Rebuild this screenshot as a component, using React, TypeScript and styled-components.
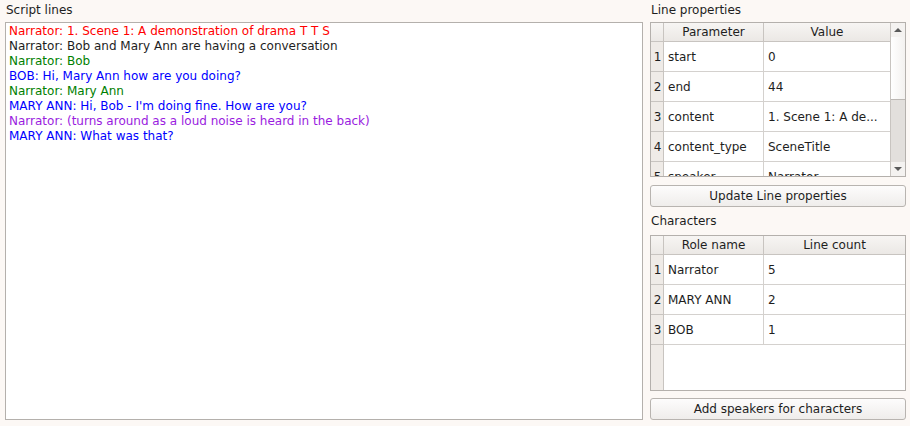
import React from "react";
import styled, { createGlobalStyle } from "styled-components";

const GlobalStyle = createGlobalStyle`
  html, body {
    margin: 0;
    padding: 0;
    background: #fcf8f5;
  }
  body {
    font-family: "DejaVu Sans", "Liberation Sans", sans-serif;
    font-size: 12px;
    color: #1e1e1e;
  }
`;

const Window = styled.div`
  width: 910px;
  height: 426px;
  box-sizing: border-box;
  padding: 0 4px 6px 5px;
  display: grid;
  grid-template-columns: 638px 256px;
  column-gap: 7px;
  background: #fcf8f5;
`;

const Column = styled.div`
  display: flex;
  flex-direction: column;
  min-height: 0;
`;

const Label = styled.div<{ $top: number; $bottom: number }>`
  height: 14px;
  line-height: 14px;
  margin-top: ${(p) => p.$top}px;
  margin-bottom: ${(p) => p.$bottom}px;
  padding-left: 1px;
  color: #1e1e1e;
`;

const ScriptBox = styled.div`
  flex: 1;
  background: #ffffff;
  border: 1px solid #b4b0ac;
  padding: 1px 3px;
  overflow: hidden;
`;

const ScriptLine = styled.div<{ $color: string }>`
  color: ${(p) => p.$color};
  line-height: 15px;
  white-space: nowrap;
`;

const TableFrame = styled.div<{ $height: number; $scroll?: boolean }>`
  height: ${(p) => p.$height}px;
  box-sizing: border-box;
  border: 1px solid #b4b0ac;
  background: #ffffff;
  display: grid;
  grid-template-columns: ${(p) => (p.$scroll ? "1fr 15px" : "1fr")};
  overflow: hidden;
`;

const Grid = styled.div<{ $rows: string }>`
  display: grid;
  grid-template-columns: 13px 100px 1fr;
  grid-template-rows: ${(p) => p.$rows};
  grid-auto-rows: 30px;
  overflow: hidden;
  min-height: 0;
`;

const HeaderCell = styled.div`
  background: linear-gradient(#f7f5f3, #ebe8e5);
  border-right: 1px solid #c8c4c0;
  border-bottom: 1px solid #c8c4c0;
  display: flex;
  align-items: center;
  justify-content: center;
  color: #1e1e1e;
  &:nth-child(3) {
    border-right: none;
  }
`;

const RowHead = styled.div`
  background: #efebe7;
  border-right: 1px solid #c8c4c0;
  border-bottom: 1px solid #c8c4c0;
  display: flex;
  align-items: center;
  justify-content: center;
  padding-left: 1px;
`;

const Cell = styled.div<{ $last?: boolean }>`
  border-right: ${(p) => (p.$last ? "none" : "1px solid #d4d1ce")};
  border-bottom: 1px solid #d4d1ce;
  display: flex;
  align-items: center;
  padding-left: 4px;
  white-space: nowrap;
  overflow: hidden;
`;

const EmptyHead = styled.div`
  background: #efebe7;
  border-right: 1px solid #c8c4c0;
`;

const EmptyFill = styled.div`
  grid-column: span 2;
`;

const ScrollBar = styled.div`
  border-left: 1px solid #c8c4c0;
  display: grid;
  grid-template-rows: 14px 63px 1fr 14px;
  background: #e2dfdc;
`;

const ArrowBox = styled.div`
  background: #f4f2f0;
  display: flex;
  align-items: center;
  justify-content: center;
`;

const Handle = styled.div`
  background: linear-gradient(90deg, #ffffff, #f3f1ef);
  border-bottom: 1px solid #bcb8b4;
`;

const Trough = styled.div`
  background: #e2dfdc;
`;

const Arrow = styled.div<{ $down?: boolean }>`
  width: 0;
  height: 0;
  border-left: 4px solid transparent;
  border-right: 4px solid transparent;
  ${(p) =>
    p.$down
      ? "border-top: 4px solid #5a5a5a;"
      : "border-bottom: 4px solid #5a5a5a;"}
`;

const Button = styled.button<{ $top: number }>`
  margin-top: ${(p) => p.$top}px;
  height: 22px;
  width: 100%;
  border: 1px solid #b8b4b0;
  border-radius: 3px;
  background: linear-gradient(#fdfcfc, #efedeb);
  font-family: "DejaVu Sans", "Liberation Sans", sans-serif;
  font-size: 12px;
  color: #1e1e1e;
  padding: 0;
`;

const scriptLines = [
  { color: "#ff0000", text: "Narrator: 1. Scene 1: A demonstration of drama T T S" },
  { color: "#1e1e1e", text: "Narrator: Bob and Mary Ann are having a conversation" },
  { color: "#008000", text: "Narrator: Bob" },
  { color: "#0000ff", text: "BOB: Hi, Mary Ann how are you doing?" },
  { color: "#008000", text: "Narrator: Mary Ann" },
  { color: "#0000ff", text: "MARY ANN: Hi, Bob - I'm doing fine. How are you?" },
  { color: "#9a1ce0", text: "Narrator: (turns around as a loud noise is heard in the back)" },
  { color: "#0000ff", text: "MARY ANN: What was that?" },
];

const properties = [
  ["start", "0"],
  ["end", "44"],
  ["content", "1. Scene 1: A de..."],
  ["content_type", "SceneTitle"],
  ["speaker", "Narrator"],
];

const characters = [
  ["Narrator", "5"],
  ["MARY ANN", "2"],
  ["BOB", "1"],
];

export default function App() {
  return (
    <>
      <GlobalStyle />
      <Window>
        <Column>
          <Label $top={3} $bottom={5}>Script lines</Label>
          <ScriptBox>
            {scriptLines.map((l, i) => (
              <ScriptLine key={i} $color={l.color}>
                {l.text}
              </ScriptLine>
            ))}
          </ScriptBox>
        </Column>

        <Column>
          <Label $top={3} $bottom={5}>Line properties</Label>
          <TableFrame $height={155} $scroll>
            <Grid $rows="19px">
              <HeaderCell />
              <HeaderCell>Parameter</HeaderCell>
              <HeaderCell>Value</HeaderCell>
              {properties.map(([k, v], i) => (
                <React.Fragment key={k}>
                  <RowHead>{i + 1}</RowHead>
                  <Cell>{k}</Cell>
                  <Cell $last>{v}</Cell>
                </React.Fragment>
              ))}
            </Grid>
            <ScrollBar>
              <ArrowBox>
                <Arrow />
              </ArrowBox>
              <Handle />
              <Trough />
              <ArrowBox>
                <Arrow $down />
              </ArrowBox>
            </ScrollBar>
          </TableFrame>
          <Button $top={8}>Update Line properties</Button>
          <Label $top={7} $bottom={7}>Characters</Label>
          <TableFrame $height={156}>
            <Grid $rows="19px 30px 30px 30px 1fr">
              <HeaderCell />
              <HeaderCell>Role name</HeaderCell>
              <HeaderCell>Line count</HeaderCell>
              {characters.map(([k, v], i) => (
                <React.Fragment key={k}>
                  <RowHead>{i + 1}</RowHead>
                  <Cell>{k}</Cell>
                  <Cell $last>{v}</Cell>
                </React.Fragment>
              ))}
              <EmptyHead />
              <EmptyFill />
            </Grid>
          </TableFrame>
          <Button $top={7}>Add speakers for characters</Button>
        </Column>
      </Window>
    </>
  );
}
